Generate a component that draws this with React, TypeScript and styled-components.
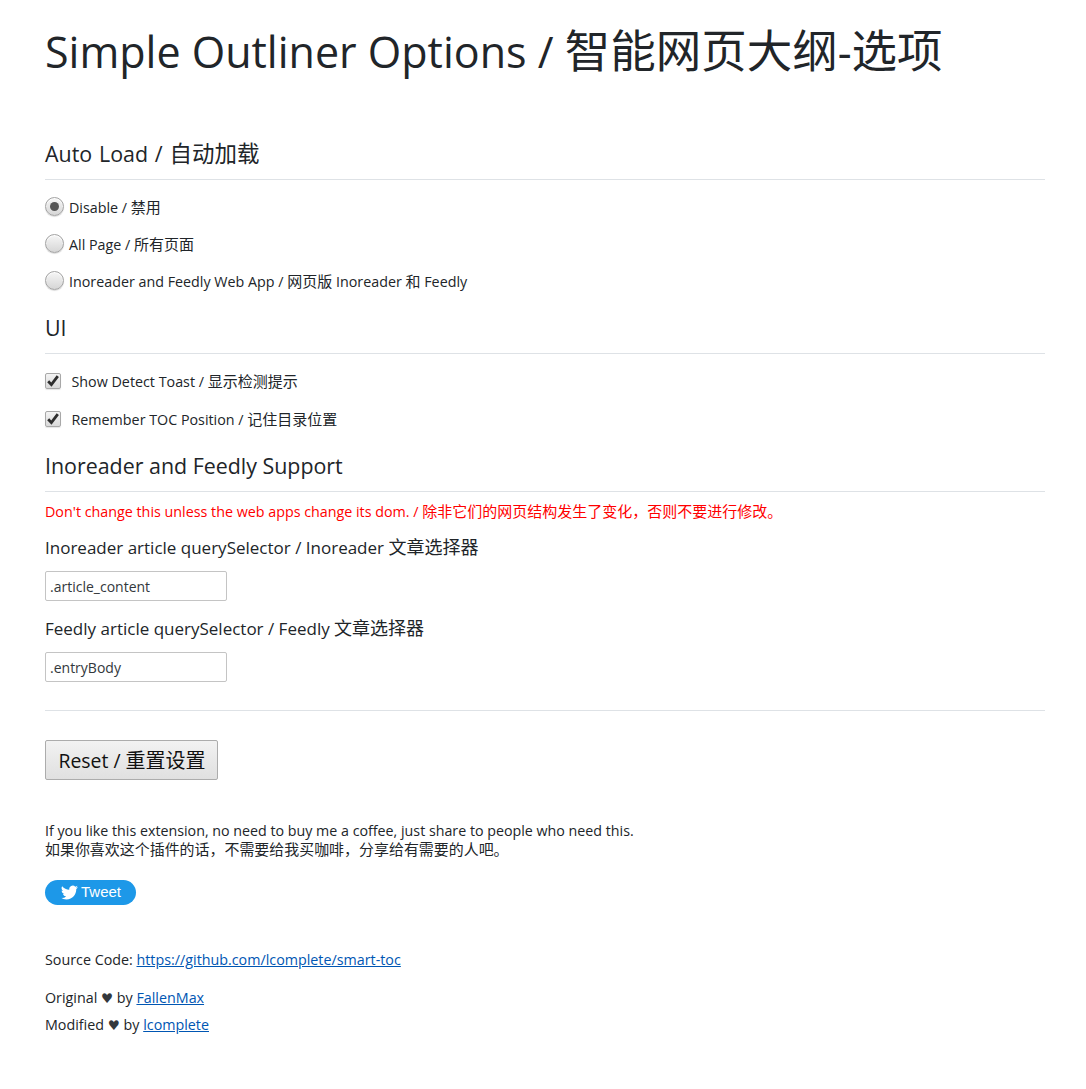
import React from 'react'
import styled, { createGlobalStyle } from 'styled-components'

const Global = createGlobalStyle`
  html, body { margin: 0; padding: 0; background: #fff; }
  body {
    font-family: "Open Sans", "Noto Sans CJK SC", sans-serif;
    color: #212529;
    font-size: 14.3px;
  }
  * { box-sizing: border-box; }
`

const Page = styled.div`
  width: 1086px;
  height: 1089px;
  padding: 22px 41px 0 45px;
  overflow: hidden;
`

// Chinese runs sit slightly larger than the latin text around them
const Han = styled.span`
  font-family: "Noto Sans CJK SC", sans-serif;
  font-size: var(--han-size, 1.05em);
  line-height: 0;
`

const Mixed = ({ text }: { text: string }) => (
  <>
    {text.split(/([\u3000-\u9fff\uff00-\uffef]+)/).map((part, i) =>
      i % 2 ? <Han key={i}>{part}</Han> : part,
    )}
  </>
)

const Title = styled.h1`
  --han-size: 45.5px;
  margin: 0 0 55px;
  font-size: 43px;
  line-height: 60px;
  font-weight: 400;
  color: #212529;
`

const Section = styled.h2<{ $wordGap?: number }>`
  margin: 0;
  padding: 2px 0 10px;
  border-bottom: 1px solid #dee2e6;
  font-size: 21.4px;
  line-height: 30px;
  font-weight: 400;
  word-spacing: ${({ $wordGap }) => $wordGap ?? 0}px;
`

const OptionList = styled.div`
  display: flex;
  flex-direction: column;
  gap: 15.1px;
  margin: 16.3px 0 18.5px;
`

const Option = styled.label`
  display: flex;
  align-items: center;
  height: 22px;
  line-height: 22px;
  white-space: pre;
`

const OptionText = styled.span`
  padding-top: 2px;
`

const RadioDot = styled.span<{ $checked?: boolean }>`
  flex: none;
  width: 19px;
  height: 19px;
  margin: -2px 5px 0 0;
  border-radius: 50%;
  border: 1px solid #a3a3a3;
  background: linear-gradient(#f6f6f6, #d6d6d6);
  box-shadow: inset 0 1px 1px #fff, 0 1px 1px rgba(0, 0, 0, 0.15);
  display: flex;
  align-items: center;
  justify-content: center;

  &::after {
    content: '';
    display: ${({ $checked }) => ($checked ? 'block' : 'none')};
    width: 9px;
    height: 9px;
    border-radius: 50%;
    background: #555;
  }
`

const CheckBox = styled.span`
  flex: none;
  width: 16px;
  height: 16px;
  margin-right: 10.5px;
  border-radius: 2px;
  border: 1px solid #a8a8a8;
  background: linear-gradient(#f4f4f4, #d9d9d9);
  box-shadow: 0 1px 1px rgba(0, 0, 0, 0.1);
  display: flex;
  align-items: center;
  justify-content: center;
`

const ChecksList = styled(OptionList)`
  gap: 16px;
  margin: 16px 0 19px;
`

const Warning = styled.p`
  margin: 12px 0 0;
  color: #ff0000;
  line-height: 16px;
`

const FieldLabel = styled.div`
  --han-size: 18px;
  margin-top: 15px;
  font-size: 17px;
  line-height: 26px;
`

const Input = styled.input`
  display: block;
  width: 182px;
  height: 30px;
  margin-top: 10px;
  padding: 1px 4px 0;
  border: 1px solid #c4c4c4;
  border-radius: 2px;
  background: #fff;
  color: #33383c;
  font: inherit;
  font-size: 14px;
`

const Rule = styled.hr`
  margin: 28px 0 29px;
  border: 0;
  border-top: 1px solid #dee2e6;
`

const ResetButton = styled.button`
  --han-size: 20px;
  display: block;
  width: 173px;
  height: 40px;
  padding: 2px 0 0 1px;
  border: 1px solid #acacac;
  border-radius: 2px;
  background: linear-gradient(#f2f2f2, #e0e0e0);
  color: #111;
  font: inherit;
  font-size: 19.4px;
`

const Note = styled.p`
  margin: 41px 0 0;
  font-size: 14.25px;
  line-height: 19px;
`

const TweetButton = styled.a`
  display: flex;
  align-items: center;
  justify-content: center;
  gap: 3px;
  width: 91px;
  height: 25px;
  margin-top: 21px;
  padding-left: 1px;
  border-radius: 13px;
  background: #1d98e8;
  color: #fff;
  font-family: "Liberation Sans", sans-serif;
  font-size: 15px;
`

const TweetLabel = styled.span`
  margin-top: -2px;
`

const Source = styled.p<{ $top: number }>`
  margin: ${({ $top }) => $top}px 0 0;
  line-height: 22px;
`

const Heart = styled.span`
  font-family: "DejaVu Sans", sans-serif;
  font-size: 13.5px;
  line-height: 0;
  color: #33383c;
`

const Anchor = styled.a`
  color: #0056b3;
  text-decoration: underline;
`

const Bird = () => (
  <svg width="17" height="17" viewBox="0 0 24 24" fill="#fff">
    <path d="M23.95 4.57a10 10 0 0 1-2.82.77 4.96 4.96 0 0 0 2.16-2.72 9.9 9.9 0 0 1-3.12 1.18 4.92 4.92 0 0 0-8.38 4.48A13.96 13.96 0 0 1 1.64 3.16a4.92 4.92 0 0 0 1.52 6.57 4.9 4.9 0 0 1-2.23-.62v.06a4.92 4.92 0 0 0 3.95 4.83 5 5 0 0 1-2.21.08 4.94 4.94 0 0 0 4.6 3.42A9.87 9.87 0 0 1 0 19.54a13.94 13.94 0 0 0 7.55 2.21c9.05 0 14-7.5 14-13.98q0-.32-.01-.63a10 10 0 0 0 2.41-2.57z" />
  </svg>
)

const Tick = () => (
  <svg width="14" height="14" viewBox="0 0 14 14">
    <path d="M2.2 7.2 5.4 10.6 11.8 2.2" fill="none" stroke="#2e2e2e" strokeWidth="2.8" />
  </svg>
)

export default function App() {
  return (
    <Page>
      <Global />
      <Title><Mixed text="Simple Outliner Options / 智能网页大纲-选项" /></Title>

      <Section $wordGap={1.3}><Mixed text="Auto Load / 自动加载" /></Section>
      <OptionList>
        <Option><RadioDot $checked /><OptionText><Mixed text="Disable / 禁用" /></OptionText></Option>
        <Option><RadioDot /><OptionText><Mixed text="All Page / 所有页面" /></OptionText></Option>
        <Option><RadioDot /><OptionText><Mixed text="Inoreader and Feedly Web App / 网页版 Inoreader 和 Feedly" /></OptionText></Option>
      </OptionList>

      <Section>UI</Section>
      <ChecksList>
        <Option><CheckBox><Tick /></CheckBox><OptionText><Mixed text="Show Detect Toast / 显示检测提示" /></OptionText></Option>
        <Option><CheckBox><Tick /></CheckBox><OptionText><Mixed text="Remember TOC Position / 记住目录位置" /></OptionText></Option>
      </ChecksList>

      <Section>Inoreader and Feedly Support</Section>
      <Warning><Mixed text="Don't change this unless the web apps change its dom. / 除非它们的网页结构发生了变化，否则不要进行修改。" /></Warning>
      <FieldLabel><Mixed text="Inoreader article querySelector / Inoreader 文章选择器" /></FieldLabel>
      <Input defaultValue=".article_content" />
      <FieldLabel><Mixed text="Feedly article querySelector / Feedly 文章选择器" /></FieldLabel>
      <Input defaultValue=".entryBody" />

      <Rule />
      <ResetButton><Mixed text="Reset / 重置设置" /></ResetButton>

      <Note>
        If you like this extension, no need to buy me a coffee, just share to people who need this.
        <br />
        <Mixed text="如果你喜欢这个插件的话，不需要给我买咖啡，分享给有需要的人吧。" />
      </Note>
      <TweetButton><Bird /><TweetLabel>Tweet</TweetLabel></TweetButton>

      <Source $top={44}>Source Code: <Anchor href="#">https://github.com/lcomplete/smart-toc</Anchor></Source>
      <Source $top={16}>Original <Heart>♥</Heart> by <Anchor href="#">FallenMax</Anchor></Source>
      <Source $top={5}>Modified <Heart>♥</Heart> by <Anchor href="#">lcomplete</Anchor></Source>
    </Page>
  )
}
